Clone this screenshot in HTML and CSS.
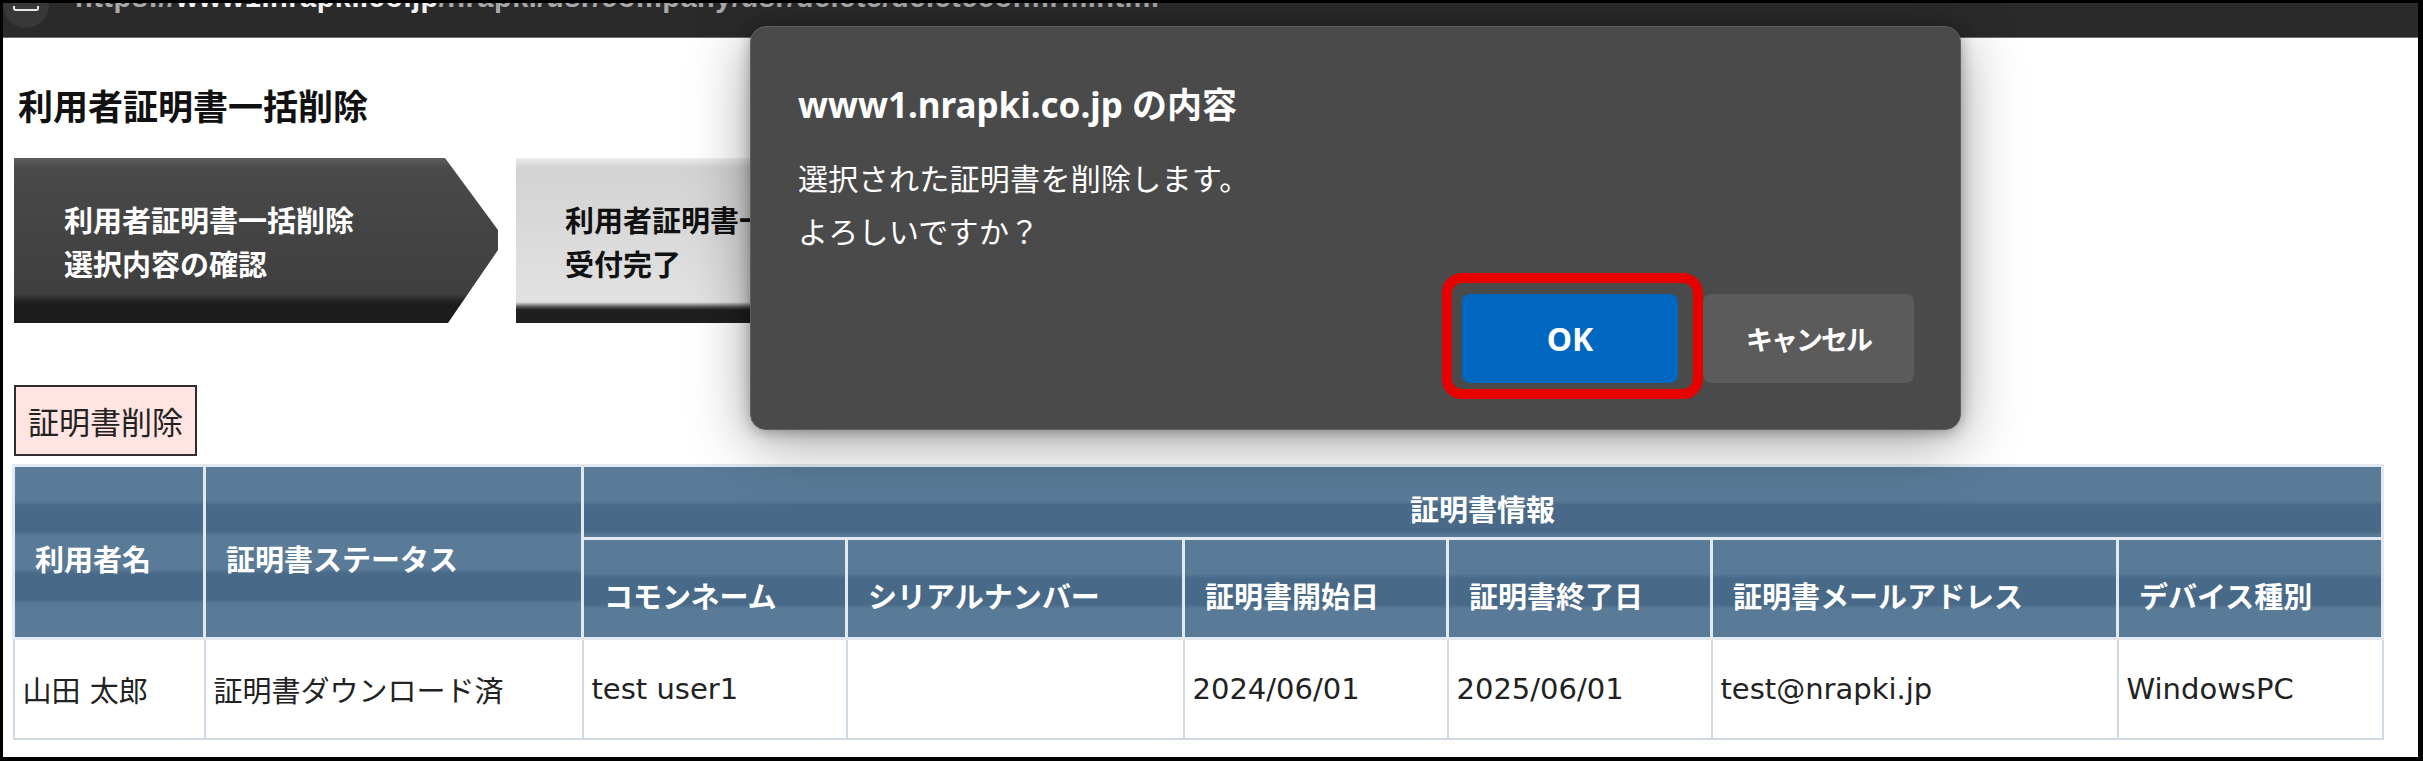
FILE: index.html
```html
<!DOCTYPE html>
<html lang="ja">
<head>
<meta charset="utf-8">
<title>利用者証明書一括削除</title>
<link rel="stylesheet" href="styles.css">
</head>
<body>
<div class="frame">
  <div class="topbar">
    <span class="site-icon"><span class="site-icon-mark"></span></span>
    <span class="url"><span class="url-dim">https://</span><span class="url-host">www1.nrapki.co.jp</span><span class="url-dim">/nrapki/usr/company/usr/delete/deleteconfirm.html</span></span>
  </div>
  <main class="page">
    <h1 class="title">利用者証明書一括削除</h1>
    <div class="steps">
      <div class="step step-current">利用者証明書一括削除<br>選択内容の確認</div>
      <div class="step step-next">利用者証明書一括削除<br>受付完了</div>
    </div>
    <button class="delete-btn" type="button">証明書削除</button>
    <table class="cert-table">
      <colgroup>
        <col class="c-user"><col class="c-status"><col class="c-cn"><col class="c-serial"><col class="c-start"><col class="c-end"><col class="c-mail"><col class="c-device">
      </colgroup>
      <thead>
        <tr class="head-row1">
          <th rowspan="2">利用者名</th>
          <th rowspan="2">証明書ステータス</th>
          <th colspan="6" class="th-center">証明書情報</th>
        </tr>
        <tr class="head-row2">
          <th>コモンネーム</th>
          <th>シリアルナンバー</th>
          <th>証明書開始日</th>
          <th>証明書終了日</th>
          <th>証明書メールアドレス</th>
          <th>デバイス種別</th>
        </tr>
      </thead>
      <tbody>
        <tr class="data-row">
          <td>山田 太郎</td>
          <td>証明書ダウンロード済</td>
          <td>test user1</td>
          <td></td>
          <td>2024/06/01</td>
          <td>2025/06/01</td>
          <td>test@nrapki.jp</td>
          <td>WindowsPC</td>
        </tr>
      </tbody>
    </table>
  </main>

  <div class="dialog" role="dialog">
    <div class="dialog-title">www1.nrapki.co.jp の内容</div>
    <div class="dialog-msg">選択された証明書を削除します。<br>よろしいですか？</div>
    <div class="dialog-buttons">
      <span class="ok-wrap">
        <button class="dlg-btn dlg-ok" type="button">OK</button>
        <span class="highlight"></span>
      </span>
      <button class="dlg-btn dlg-cancel" type="button">キャンセル</button>
    </div>
  </div>
</div>
</body>
</html>
```

FILE: styles.css
```css
* { box-sizing: border-box; }

html, body {
  margin: 0;
  padding: 0;
  background: #000;
}

.frame {
  position: relative;
  width: 2423px;
  height: 761px;
  border-style: solid;
  border-color: #000;
  border-width: 3px 5px 4px 3px;
  background: #fff;
  overflow: hidden;
  display: flex;
  flex-direction: column;
  font-family: "Noto Sans CJK JP", sans-serif;
}

/* browser bar (mostly cut off) */
.topbar {
  height: 35px;
  flex: none;
  background: #2a2a2a;
  border-bottom: 1px solid #6e6e6e;
  display: flex;
  align-items: flex-start;
  overflow: hidden;
}
.site-icon {
  width: 46px;
  height: 46px;
  margin-top: -21px;
  border-radius: 50%;
  background: #383838;
  display: flex;
  justify-content: center;
  align-items: flex-end;
  padding-bottom: 17px;
  flex: none;
}
.site-icon-mark {
  width: 26px;
  height: 5px;
  border: 2px solid #e8e8e8;
  border-top: none;
  border-radius: 0 0 3px 3px;
}
.url {
  margin-top: -23px;
  margin-left: 26px;
  font-family: "Liberation Sans", sans-serif;
  font-weight: bold;
  font-size: 29px;
  line-height: 34px;
  white-space: nowrap;
  letter-spacing: 0.5px;
}
.url-dim { color: #a9a9a9; }
.url-host { color: #f2f2f2; }

/* page */
.page {
  padding: 47px 0 0 9px;
  display: flex;
  flex-direction: column;
  align-items: flex-start;
}
.title {
  margin: 0 0 0 6px;
  font-size: 35px;
  line-height: 40px;
  font-weight: bold;
  color: #111;
}

.steps {
  margin: 33px 0 0 2px;
  display: flex;
  gap: 18px;
}
.step {
  width: 484px;
  height: 165px;
  display: flex;
  align-items: center;
  padding-left: 50px;
  font-size: 29px;
  line-height: 44px;
  font-weight: bold;
  white-space: nowrap;
  overflow: hidden;
}
.step-current {
  color: #fff;
  background: linear-gradient(to bottom, #5e5e5e 0, #4a4a4a 10px, #454545 60px, #3f3f3f 136px, #262626 142px, #1c1c1c 147px, #1c1c1c 165px);
  clip-path: polygon(0 0, 431px 0, 484px 72px, 484px 92px, 434px 165px, 0 165px);
}
.step-next {
  color: #111;
  padding-left: 49px;
  background:
    linear-gradient(to bottom, rgba(255,255,255,.6) 0, rgba(255,255,255,0) 10px),
    linear-gradient(to bottom, #d2d2d2 0, #d8d8d8 60px, #e2e2e2 144px, #505050 149px, #1f1f1f 152px, #1f1f1f 165px);
}

.delete-btn {
  margin: 62px 0 0 2px;
  height: 71px;
  padding: 0 12px;
  border: 2px solid #2e2e2e;
  background: #ffe4e1;
  color: #222;
  font-family: "Noto Sans CJK JP", sans-serif;
  font-size: 31px;
  line-height: 40px;
  cursor: pointer;
}

/* table */
.cert-table {
  margin-top: 8px;
  width: 2369px;
  table-layout: fixed;
  border-collapse: collapse;
  border: 2px solid #c4d2df;
}
.c-user { width: 191px; }
.c-status { width: 378px; }
.c-cn { width: 264px; }
.c-serial { width: 337px; }
.c-start { width: 264px; }
.c-end { width: 264px; }
.c-mail { width: 406px; }
.c-device { width: 265px; }

.cert-table th {
  border: 3px solid #e1e8ef;
  background: repeating-linear-gradient(to bottom, #5a7b98 0, #5a7b98 33px, #486987 38px, #486987 64px, #5a7b98 68px);
  color: #fff;
  font-size: 29px;
  font-weight: bold;
  text-align: left;
  padding: 12px 0 0 20px;
  white-space: nowrap;
  line-height: 40px;
}
.cert-table th.th-center {
  text-align: center;
  padding-left: 0;
}
.head-row1 { height: 73px; }
.head-row2 { height: 100px; }

.cert-table td {
  height: 100px;
  border: 2px solid #cfdae5;
  padding: 0 8px;
  font-family: "DejaVu Sans", "Noto Sans CJK JP", sans-serif;
  font-size: 29px;
  color: #222;
  white-space: nowrap;
  vertical-align: middle;
}

/* confirm dialog (overlay) */
.dialog {
  position: absolute;
  left: 747px;
  top: 23px;
  width: 1211px;
  height: 404px;
  background: #4a4a4a;
  border: 1px solid #5f5f5f;
  border-radius: 16px;
  box-shadow: 0 12px 60px rgba(0,0,0,.38), 0 2px 14px rgba(0,0,0,.3);
  padding: 56px 46px 46px 47px;
  display: flex;
  flex-direction: column;
  color: #fff;
}
.dialog-title {
  font-family: "Noto Sans", "Noto Sans CJK JP", sans-serif;
  font-weight: bold;
  font-size: 35px;
  line-height: 44px;
  white-space: nowrap;
}
.dialog-msg {
  margin-top: 24px;
  font-size: 30px;
  line-height: 53px;
  letter-spacing: 0.3px;
}
.dialog-buttons {
  margin-top: auto;
  display: flex;
  justify-content: flex-end;
  gap: 25px;
}
.ok-wrap {
  position: relative;
  display: flex;
}
.dlg-btn {
  height: 89px;
  border: none;
  border-radius: 8px;
  color: #fff;
  font-weight: bold;
  cursor: pointer;
}
.dlg-ok {
  width: 216px;
  background: #0067c0;
  font-family: "Noto Sans", sans-serif;
  font-size: 32px;
}
.dlg-cancel {
  width: 211px;
  background: #5b5b5b;
  font-family: "Noto Sans CJK JP", sans-serif;
  font-size: 27px;
  letter-spacing: -2px;
}
.highlight {
  position: absolute;
  top: -21px;
  left: -20px;
  right: -25px;
  bottom: -16px;
  border: 10px solid #e60000;
  border-radius: 20px;
  pointer-events: none;
}
```
